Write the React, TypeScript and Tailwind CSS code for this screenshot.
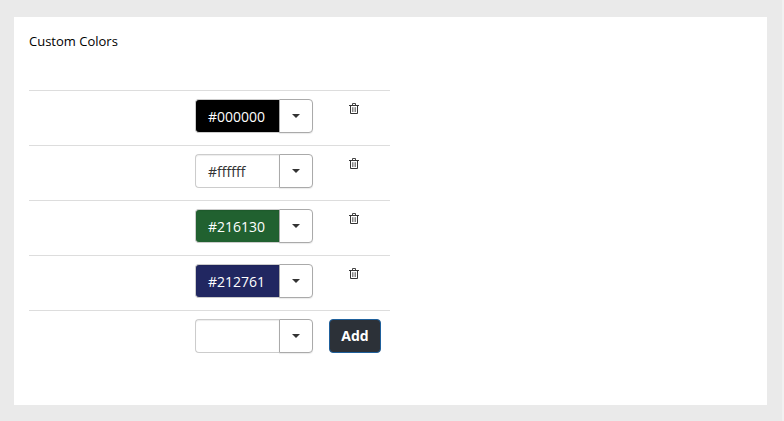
const rows = [
  { value: "#000000", style: "bg-black text-white" },
  { value: "#ffffff", style: "bg-white text-[#333]" },
  { value: "#216130", style: "bg-[#216130] text-white" },
  { value: "#212761", style: "bg-[#212761] text-white" },
];

function TrashIcon() {
  return (
    <svg width="10" height="11" viewBox="0 0 10 11" fill="none" stroke="#333" shapeRendering="auto">
      <path d="M0 2.5h10" strokeWidth="1" />
      <path d="M3.5 2V.5h3V2" strokeWidth=".9" />
      <path d="M1.5 3v7.5h7V3" strokeWidth="1" />
      <path d="M3.5 4.2v4.8M5 4.2v4.8M6.5 4.2v4.8" strokeWidth=".6" />
    </svg>
  );
}

function ColorField({ value, style }: { value: string; style: string }) {
  return (
    <div className="flex h-[34px] w-[118px]">
      <div
        className={`flex w-[84px] items-center rounded-l-[4px] border border-r-0 border-[#ccc] pt-0.5 pl-3 text-sm shadow-[inset_0_1px_1px_rgba(0,0,0,0.075)] ${style}`}
      >
        {value}
      </div>
      <button
        aria-label="Choose color"
        className="flex w-[34px] items-center justify-center rounded-r-[4px] border border-[#aaa] bg-white shadow-[0_1px_1px_rgba(0,0,0,0.08)]"
      >
        <svg width="8" height="4" viewBox="0 0 8 4">
          <path d="M0 0h8L4 4z" fill="#333" />
        </svg>
      </button>
    </div>
  );
}

export default function App() {
  return (
    <div className="h-[421px] w-[784px] overflow-hidden border-r-2 border-[#f1f1f1] bg-[#eaeaea] pt-[17px] pl-[14px] font-['Open_Sans','Noto_Sans',sans-serif]">
      <main className="h-[388px] w-[753px] bg-white pt-[15px] pl-[15px]">
        <h1 className="h-[58px] text-[13px] leading-[19px] text-black">Custom Colors</h1>
        <div className="w-[361px]">
          {rows.map((row) => (
            <div key={row.value} className="flex h-[55px] border-t border-[#ddd] pt-2 pl-[166px]">
              <ColorField value={row.value} style={row.style} />
              <button aria-label="Delete color" className="ml-[36px] h-[11px] pt-1">
                <TrashIcon />
              </button>
            </div>
          ))}
          <div className="flex h-[55px] border-t border-[#ddd] pt-2 pl-[166px]">
            <ColorField value="" style="bg-white" />
            <button className="ml-4 h-[34px] w-[52px] rounded-[4px] border border-[#1f609c] bg-[#2c3138] text-sm font-bold text-white">
              Add
            </button>
          </div>
        </div>
      </main>
    </div>
  );
}
